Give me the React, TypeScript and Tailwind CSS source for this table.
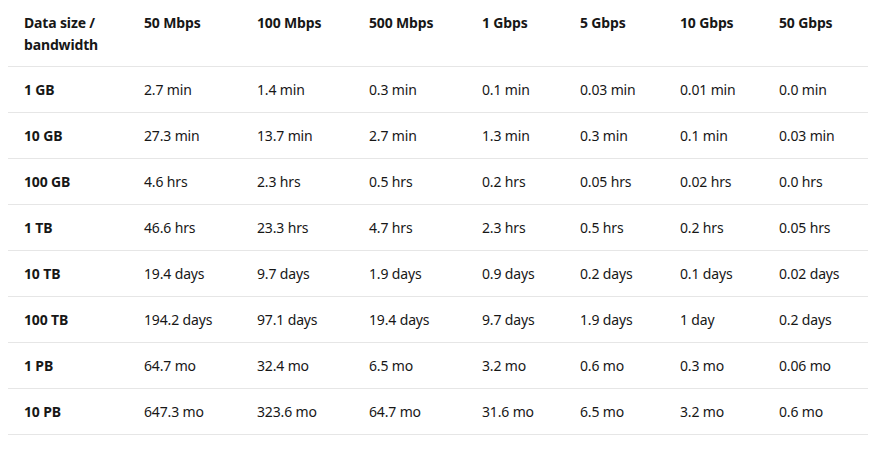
const headers = ["Data size / bandwidth", "50 Mbps", "100 Mbps", "500 Mbps", "1 Gbps", "5 Gbps", "10 Gbps", "50 Gbps"];

const widths = ["w-[120px]", "w-[113px]", "w-[112px]", "w-[113px]", "w-[98px]", "w-[100px]", "w-[99px]", "w-[105px]"];

const rows = [
  ["1 GB", "2.7 min", "1.4 min", "0.3 min", "0.1 min", "0.03 min", "0.01 min", "0.0 min"],
  ["10 GB", "27.3 min", "13.7 min", "2.7 min", "1.3 min", "0.3 min", "0.1 min", "0.03 min"],
  ["100 GB", "4.6 hrs", "2.3 hrs", "0.5 hrs", "0.2 hrs", "0.05 hrs", "0.02 hrs", "0.0 hrs"],
  ["1 TB", "46.6 hrs", "23.3 hrs", "4.7 hrs", "2.3 hrs", "0.5 hrs", "0.2 hrs", "0.05 hrs"],
  ["10 TB", "19.4 days", "9.7 days", "1.9 days", "0.9 days", "0.2 days", "0.1 days", "0.02 days"],
  ["100 TB", "194.2 days", "97.1 days", "19.4 days", "9.7 days", "1.9 days", "1 day", "0.2 days"],
  ["1 PB", "64.7 mo", "32.4 mo", "6.5 mo", "3.2 mo", "0.6 mo", "0.3 mo", "0.06 mo"],
  ["10 PB", "647.3 mo", "323.6 mo", "64.7 mo", "31.6 mo", "6.5 mo", "3.2 mo", "0.6 mo"],
];

export default function App() {
  return (
    <div className="bg-white w-[882px] h-[466px] px-2 font-['Segoe_UI','Noto_Sans',sans-serif] text-[14px] leading-[21px] tracking-[-0.15px] text-[#171717]">
      <table className="w-[860px] table-fixed border-collapse">
        <thead>
          <tr className="border-b border-[#e6e6e6]">
            {headers.map((h, i) => (
              <th key={h} className={`${widths[i]} px-4 pt-3 pb-[10px] text-left align-top font-bold leading-[22px]`}>
                {i === 0 ? (
                  <>
                    Data size /<br />bandwidth
                  </>
                ) : (
                  h
                )}
              </th>
            ))}
          </tr>
        </thead>
        <tbody>
          {rows.map((r) => (
            <tr key={r[0]} className="border-b border-[#e6e6e6]">
              {r.map((c, i) => (
                <td key={i} className={`px-4 py-3 align-top ${i === 0 ? "font-bold" : ""}`}>
                  {c}
                </td>
              ))}
            </tr>
          ))}
        </tbody>
      </table>
    </div>
  );
}
